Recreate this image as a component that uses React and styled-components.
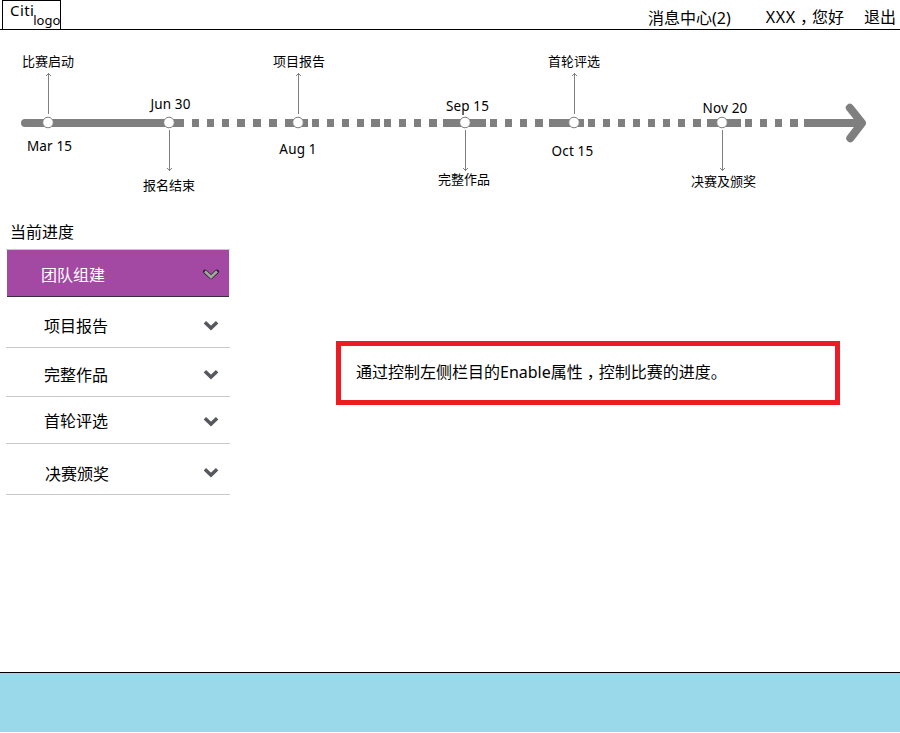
import React from "react";
import styled, { createGlobalStyle } from "styled-components";

const GlobalStyle = createGlobalStyle`
  * { box-sizing: border-box; }
  body {
    margin: 0;
    background: #fff;
    color: #000;
    font-family: "Noto Sans", "Noto Sans CJK SC", sans-serif;
    font-size: 16px;
    overflow: hidden;
  }
`;

const Page = styled.div`
  display: flex;
  flex-direction: column;
  width: 900px;
  height: 732px;
`;

const Header = styled.header`
  display: flex;
  justify-content: space-between;
  height: 30px;
  padding: 0 4px 0 2px;
  border-bottom: 1px solid #000;
  line-height: 20px;
`;

const Logo = styled.div`
  display: flex;
  width: 59px;
  height: 29px;
  padding-left: 7px;
  border: 1px solid #000;
  border-bottom: 0;
  font-size: 15px;
  white-space: nowrap;
`;

const LogoTop = styled.span`
  line-height: 18px;
  letter-spacing: 0.4px;
`;

const LogoBottom = styled.span`
  margin-top: 9px;
  margin-left: -1px;
  font-size: 13px;
  line-height: 20px;
`;

const UserNav = styled.nav`
  display: flex;
  padding-top: 7px;
  white-space: nowrap;
`;

const NavItem = styled.span`
  margin-left: ${(p) => p.$gap || 0}px;
  padding-top: ${(p) => p.$drop || 0}px;
`;

const UserName = styled.span`
  letter-spacing: 0.7px;
`;

const Comma = styled.span`
  padding: 0 4px;
  font-feature-settings: "halt";
`;

const Timeline = styled.section`
  position: relative;
  flex: none;
  height: 170px;
`;

const Track = styled.svg`
  display: block;
`;

const Label = styled.span`
  position: absolute;
  left: ${(p) => p.$x}px;
  top: ${(p) => p.$y - (p.$date ? 40 : 41)}px;
  transform: translateX(-50%);
  font-size: ${(p) => (p.$date ? 13.5 : 13)}px;
  line-height: 20px;
  letter-spacing: ${(p) => (p.$date ? 0.15 : 0)}px;
  white-space: nowrap;
`;

const Main = styled.main`
  display: flex;
  align-items: flex-start;
  flex: 1;
`;

const Sidebar = styled.aside`
  width: 224px;
  margin-left: 6px;
  padding-top: 22px;
`;

const SidebarTitle = styled.div`
  height: 27px;
  padding-left: 4px;
  line-height: 20px;
`;

const StageList = styled.div`
  border-top: 1px solid #c8c8c8;
`;

const Stage = styled.div`
  display: flex;
  justify-content: space-between;
  height: ${(p) => p.$height}px;
  margin: ${(p) => (p.$active ? "0 1px" : "0")};
  padding: 0 ${(p) => (p.$active ? 10 : 11)}px 0 ${(p) => p.$indent}px;
  background: ${(p) => (p.$active ? "#a349a4" : "transparent")};
  color: ${(p) => (p.$active ? "#fff" : "#000")};
  border-bottom: 1px solid ${(p) => (p.$active ? "#3b2b40" : "#c8c8c8")};
`;

const StageName = styled.span`
  padding-top: ${(p) => p.$top}px;
  line-height: 20px;
`;

const Chevron = styled.svg`
  flex: none;
  margin-top: ${(p) => p.$top}px;
`;

const Notice = styled.div`
  width: 504px;
  height: 64px;
  margin: 141px 0 0 106px;
  padding: 16px 0 0 15px;
  border: 5px solid #ed1c24;
  line-height: 20px;
  white-space: nowrap;
`;

const Footer = styled.footer`
  height: 60px;
  border-top: 1px solid #000;
  background: #99d9ea;
`;

const segments = [
  [25, 184], [192, 199], [207, 214], [222, 229], [237, 245], [253, 261],
  [269, 277], [285, 308], [312, 319], [327, 334], [342, 349], [357, 364],
  [371, 380], [384, 391], [399, 406], [414, 421], [429, 437], [443, 486],
  [490, 497], [505, 512], [520, 527], [535, 543], [549, 584], [588, 595],
  [603, 610], [618, 625], [633, 640], [648, 655], [663, 670], [678, 685],
  [693, 701], [707, 741], [745, 752], [760, 767], [775, 782], [790, 798],
  [804, 860],
];

const milestones = [
  { x: 48, up: true, name: "比赛启动", nameX: 48, nameY: 62, date: "Mar 15", dateX: 49.5, dateY: 146 },
  { x: 169, up: false, name: "报名结束", nameX: 169, nameY: 186, date: "Jun 30", dateX: 170.5, dateY: 104 },
  { x: 298, up: true, name: "项目报告", nameX: 299, nameY: 62, date: "Aug 1", dateX: 298, dateY: 149 },
  { x: 465, up: false, name: "完整作品", nameX: 464, nameY: 180, date: "Sep 15", dateX: 467.5, dateY: 106 },
  { x: 574, up: true, name: "首轮评选", nameX: 574, nameY: 62, date: "Oct 15", dateX: 572.5, dateY: 151 },
  { x: 722, up: false, name: "决赛及颁奖", nameX: 723.5, nameY: 182, date: "Nov 20", dateX: 725, dateY: 108 },
];

const stages = [
  { name: "团队组建", height: 47, top: 15, chevron: 18, indent: 34, active: true },
  { name: "项目报告", height: 51, top: 19, chevron: 22, indent: 38 },
  { name: "完整作品", height: 49, top: 17, chevron: 20, indent: 38 },
  { name: "首轮评选", height: 47, top: 14, chevron: 18, indent: 38 },
  { name: "决赛颁奖", height: 51, top: 20, chevron: 22, indent: 39 },
];

function StageChevron({ active, top }) {
  return (
    <Chevron $top={top} width="16" height="13" viewBox="0 0 16 13" fill="none">
      {active && (
        <path d="M2.2 3.7 8 9 13.8 3.7" stroke="#1d1a26" strokeWidth="4.2" strokeLinejoin="round" strokeLinecap="round" />
      )}
      <path
        d="M1.9 3.3 8 9 14.1 3.3"
        stroke={active ? "#a5a59f" : "#56585f"}
        strokeWidth={active ? 2.9 : 3.5}
      />
    </Chevron>
  );
}

function Milestone({ x, up }) {
  const c = x + 0.5;
  return (
    <g fill="none" stroke="#7f7f7f" strokeWidth="1">
      <path
        d={
          up
            ? `M${c} 114V73M${c - 2.5} 76l2.5-2.5 2.5 2.5`
            : `M${c} 130V171M${c - 2.5} 168l2.5 2.5 2.5-2.5`
        }
      />
      <circle cx={x} cy="122.5" r="5.3" fill="#fff" />
    </g>
  );
}

export default function App() {
  return (
    <>
      <GlobalStyle />
      <Page>
        <Header>
          <Logo>
            <LogoTop>Citi</LogoTop>
            <LogoBottom>logo</LogoBottom>
          </Logo>
          <UserNav>
            <NavItem $drop={1}>消息中心(2)</NavItem>
            <NavItem $gap={35}><UserName>XXX</UserName><Comma>，</Comma>您好</NavItem>
            <NavItem $gap={20}>退出</NavItem>
          </UserNav>
        </Header>
        <Timeline>
          <Track width="900" height="170" viewBox="0 30 900 170">
            <g fill="#7f7f7f">
              <circle cx="25" cy="123" r="4" />
              {segments.map(([from, to]) => (
                <rect key={from} x={from} y="119" width={to - from} height="8" />
              ))}
            </g>
            <path
              d="M849.8 107.8 862 123 850.3 138.3"
              fill="none"
              stroke="#7f7f7f"
              strokeWidth="8"
              strokeLinecap="round"
              strokeLinejoin="round"
            />
            {milestones.map((m) => (
              <Milestone key={m.x} x={m.x} up={m.up} />
            ))}
          </Track>
          {milestones.map((m) => (
            <React.Fragment key={m.x}>
              <Label $x={m.nameX} $y={m.nameY}>{m.name}</Label>
              <Label $x={m.dateX} $y={m.dateY} $date>{m.date}</Label>
            </React.Fragment>
          ))}
        </Timeline>
        <Main>
          <Sidebar>
            <SidebarTitle>当前进度</SidebarTitle>
            <StageList>
              {stages.map((s) => (
                <Stage key={s.name} $height={s.height} $indent={s.indent} $active={s.active}>
                  <StageName $top={s.top}>{s.name}</StageName>
                  <StageChevron active={s.active} top={s.chevron} />
                </Stage>
              ))}
            </StageList>
          </Sidebar>
          <Notice>通过控制左侧栏目的Enable属性<Comma>，</Comma>控制比赛的进度。</Notice>
        </Main>
        <Footer />
      </Page>
    </>
  );
}
